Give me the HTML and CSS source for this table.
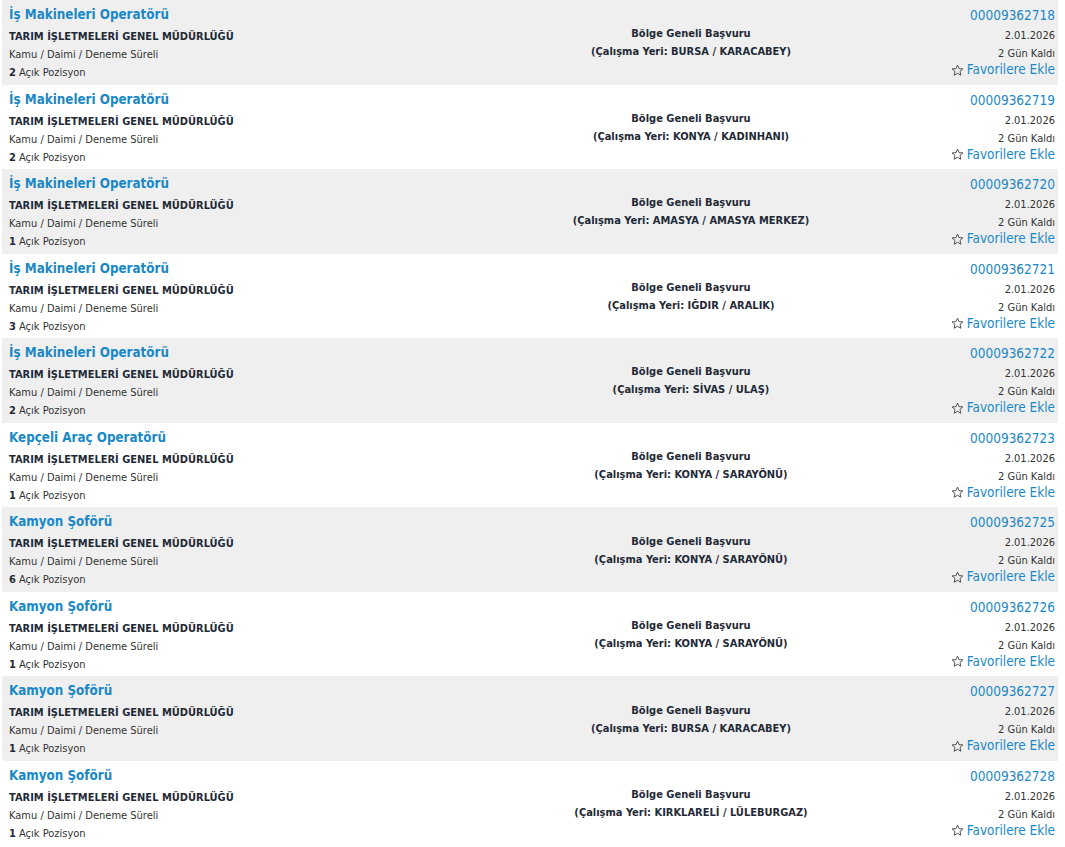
FILE: index.html
```html
<!DOCTYPE html>
<html lang="tr">
<head>
<meta charset="utf-8">
<title>İlanlar</title>
<link rel="stylesheet" href="styles.css">
</head>
<body>
<div class="list">
  <div class="row odd">
    <div class="left"><a class="title">İş Makineleri Operatörü</a><div class="org">TARIM İŞLETMELERİ GENEL MÜDÜRLÜĞÜ</div><div class="type">Kamu / Daimi / Deneme Süreli</div><div class="pos"><b>2</b> Açık Pozisyon</div></div>
    <div class="mid"><div>Bölge Geneli Başvuru</div><div>(Çalışma Yeri: BURSA / KARACABEY)</div></div>
    <div class="right"><a class="num">00009362718</a><div class="date">2.01.2026</div><div class="days">2 Gün Kaldı</div><a class="fav"><svg viewBox="0 0 14 14" class="star"><path d="M7 1.2 8.7 5 12.8 5.3 9.7 8 10.6 12.1 7 10 3.4 12.1 4.3 8 1.2 5.3 5.3 5Z"/></svg>Favorilere Ekle</a></div>
  </div>
  <div class="row">
    <div class="left"><a class="title">İş Makineleri Operatörü</a><div class="org">TARIM İŞLETMELERİ GENEL MÜDÜRLÜĞÜ</div><div class="type">Kamu / Daimi / Deneme Süreli</div><div class="pos"><b>2</b> Açık Pozisyon</div></div>
    <div class="mid"><div>Bölge Geneli Başvuru</div><div>(Çalışma Yeri: KONYA / KADINHANI)</div></div>
    <div class="right"><a class="num">00009362719</a><div class="date">2.01.2026</div><div class="days">2 Gün Kaldı</div><a class="fav"><svg viewBox="0 0 14 14" class="star"><path d="M7 1.2 8.7 5 12.8 5.3 9.7 8 10.6 12.1 7 10 3.4 12.1 4.3 8 1.2 5.3 5.3 5Z"/></svg>Favorilere Ekle</a></div>
  </div>
  <div class="row odd">
    <div class="left"><a class="title">İş Makineleri Operatörü</a><div class="org">TARIM İŞLETMELERİ GENEL MÜDÜRLÜĞÜ</div><div class="type">Kamu / Daimi / Deneme Süreli</div><div class="pos"><b>1</b> Açık Pozisyon</div></div>
    <div class="mid"><div>Bölge Geneli Başvuru</div><div>(Çalışma Yeri: AMASYA / AMASYA MERKEZ)</div></div>
    <div class="right"><a class="num">00009362720</a><div class="date">2.01.2026</div><div class="days">2 Gün Kaldı</div><a class="fav"><svg viewBox="0 0 14 14" class="star"><path d="M7 1.2 8.7 5 12.8 5.3 9.7 8 10.6 12.1 7 10 3.4 12.1 4.3 8 1.2 5.3 5.3 5Z"/></svg>Favorilere Ekle</a></div>
  </div>
  <div class="row">
    <div class="left"><a class="title">İş Makineleri Operatörü</a><div class="org">TARIM İŞLETMELERİ GENEL MÜDÜRLÜĞÜ</div><div class="type">Kamu / Daimi / Deneme Süreli</div><div class="pos"><b>3</b> Açık Pozisyon</div></div>
    <div class="mid"><div>Bölge Geneli Başvuru</div><div>(Çalışma Yeri: IĞDIR / ARALIK)</div></div>
    <div class="right"><a class="num">00009362721</a><div class="date">2.01.2026</div><div class="days">2 Gün Kaldı</div><a class="fav"><svg viewBox="0 0 14 14" class="star"><path d="M7 1.2 8.7 5 12.8 5.3 9.7 8 10.6 12.1 7 10 3.4 12.1 4.3 8 1.2 5.3 5.3 5Z"/></svg>Favorilere Ekle</a></div>
  </div>
  <div class="row odd">
    <div class="left"><a class="title">İş Makineleri Operatörü</a><div class="org">TARIM İŞLETMELERİ GENEL MÜDÜRLÜĞÜ</div><div class="type">Kamu / Daimi / Deneme Süreli</div><div class="pos"><b>2</b> Açık Pozisyon</div></div>
    <div class="mid"><div>Bölge Geneli Başvuru</div><div>(Çalışma Yeri: SİVAS / ULAŞ)</div></div>
    <div class="right"><a class="num">00009362722</a><div class="date">2.01.2026</div><div class="days">2 Gün Kaldı</div><a class="fav"><svg viewBox="0 0 14 14" class="star"><path d="M7 1.2 8.7 5 12.8 5.3 9.7 8 10.6 12.1 7 10 3.4 12.1 4.3 8 1.2 5.3 5.3 5Z"/></svg>Favorilere Ekle</a></div>
  </div>
  <div class="row">
    <div class="left"><a class="title">Kepçeli Araç Operatörü</a><div class="org">TARIM İŞLETMELERİ GENEL MÜDÜRLÜĞÜ</div><div class="type">Kamu / Daimi / Deneme Süreli</div><div class="pos"><b>1</b> Açık Pozisyon</div></div>
    <div class="mid"><div>Bölge Geneli Başvuru</div><div>(Çalışma Yeri: KONYA / SARAYÖNÜ)</div></div>
    <div class="right"><a class="num">00009362723</a><div class="date">2.01.2026</div><div class="days">2 Gün Kaldı</div><a class="fav"><svg viewBox="0 0 14 14" class="star"><path d="M7 1.2 8.7 5 12.8 5.3 9.7 8 10.6 12.1 7 10 3.4 12.1 4.3 8 1.2 5.3 5.3 5Z"/></svg>Favorilere Ekle</a></div>
  </div>
  <div class="row odd">
    <div class="left"><a class="title">Kamyon Şoförü</a><div class="org">TARIM İŞLETMELERİ GENEL MÜDÜRLÜĞÜ</div><div class="type">Kamu / Daimi / Deneme Süreli</div><div class="pos"><b>6</b> Açık Pozisyon</div></div>
    <div class="mid"><div>Bölge Geneli Başvuru</div><div>(Çalışma Yeri: KONYA / SARAYÖNÜ)</div></div>
    <div class="right"><a class="num">00009362725</a><div class="date">2.01.2026</div><div class="days">2 Gün Kaldı</div><a class="fav"><svg viewBox="0 0 14 14" class="star"><path d="M7 1.2 8.7 5 12.8 5.3 9.7 8 10.6 12.1 7 10 3.4 12.1 4.3 8 1.2 5.3 5.3 5Z"/></svg>Favorilere Ekle</a></div>
  </div>
  <div class="row">
    <div class="left"><a class="title">Kamyon Şoförü</a><div class="org">TARIM İŞLETMELERİ GENEL MÜDÜRLÜĞÜ</div><div class="type">Kamu / Daimi / Deneme Süreli</div><div class="pos"><b>1</b> Açık Pozisyon</div></div>
    <div class="mid"><div>Bölge Geneli Başvuru</div><div>(Çalışma Yeri: KONYA / SARAYÖNÜ)</div></div>
    <div class="right"><a class="num">00009362726</a><div class="date">2.01.2026</div><div class="days">2 Gün Kaldı</div><a class="fav"><svg viewBox="0 0 14 14" class="star"><path d="M7 1.2 8.7 5 12.8 5.3 9.7 8 10.6 12.1 7 10 3.4 12.1 4.3 8 1.2 5.3 5.3 5Z"/></svg>Favorilere Ekle</a></div>
  </div>
  <div class="row odd">
    <div class="left"><a class="title">Kamyon Şoförü</a><div class="org">TARIM İŞLETMELERİ GENEL MÜDÜRLÜĞÜ</div><div class="type">Kamu / Daimi / Deneme Süreli</div><div class="pos"><b>1</b> Açık Pozisyon</div></div>
    <div class="mid"><div>Bölge Geneli Başvuru</div><div>(Çalışma Yeri: BURSA / KARACABEY)</div></div>
    <div class="right"><a class="num">00009362727</a><div class="date">2.01.2026</div><div class="days">2 Gün Kaldı</div><a class="fav"><svg viewBox="0 0 14 14" class="star"><path d="M7 1.2 8.7 5 12.8 5.3 9.7 8 10.6 12.1 7 10 3.4 12.1 4.3 8 1.2 5.3 5.3 5Z"/></svg>Favorilere Ekle</a></div>
  </div>
  <div class="row">
    <div class="left"><a class="title">Kamyon Şoförü</a><div class="org">TARIM İŞLETMELERİ GENEL MÜDÜRLÜĞÜ</div><div class="type">Kamu / Daimi / Deneme Süreli</div><div class="pos"><b>1</b> Açık Pozisyon</div></div>
    <div class="mid"><div>Bölge Geneli Başvuru</div><div>(Çalışma Yeri: KIRKLARELİ / LÜLEBURGAZ)</div></div>
    <div class="right"><a class="num">00009362728</a><div class="date">2.01.2026</div><div class="days">2 Gün Kaldı</div><a class="fav"><svg viewBox="0 0 14 14" class="star"><path d="M7 1.2 8.7 5 12.8 5.3 9.7 8 10.6 12.1 7 10 3.4 12.1 4.3 8 1.2 5.3 5.3 5Z"/></svg>Favorilere Ekle</a></div>
  </div>
</div>
</body>
</html>
```
FILE: styles.css
```css
html, body {
  margin: 0;
  padding: 0;
  background: #ffffff;
}
body {
  font-family: "DejaVu Sans Condensed", "DejaVu Sans", sans-serif;
  color: #2a2a2a;
  overflow: hidden;
}
.list {
  margin: 0 7px 0 2px;
}
.row {
  display: grid;
  grid-template-columns: 1fr 400px 164px;
  height: 84.56px;
  box-sizing: border-box;
  padding: 0 3px 0 7px;
}
.row.odd {
  background: #efefef;
}
.left {
  padding-top: 5px;
}
.title {
  display: block;
  color: #1a88c6;
  font-weight: bold;
  font-size: 13.3px;
  line-height: 20px;
  margin-bottom: 3px;
}
.org {
  font-size: 11px;
  font-weight: bold;
  line-height: 18px;
  color: #1f2a36;
}
.type, .pos {
  font-size: 11px;
  line-height: 18px;
  color: #333;
}
.pos b {
  color: #1f2a36;
}
.mid {
  display: flex;
  flex-direction: column;
  justify-content: center;
  align-items: center;
  padding-top: 2px;
  font-size: 11px;
  font-weight: bold;
  line-height: 18px;
  color: #1f2a36;
}
.right {
  display: flex;
  flex-direction: column;
  align-items: flex-end;
  padding-top: 5px;
}
.num {
  color: #1a88c6;
  font-size: 13.5px;
  line-height: 20px;
  margin-bottom: 2px;
}
.date, .days {
  font-size: 11px;
  line-height: 18px;
  color: #333;
}
.fav {
  display: flex;
  align-items: center;
  color: #1a88c6;
  font-size: 13.45px;
  line-height: 16px;
  margin-top: -1px;
}
.star {
  width: 13px;
  height: 13px;
  margin-right: 3px;
  fill: none;
  stroke: #444;
  stroke-width: 1;
  stroke-linejoin: round;
}
```
